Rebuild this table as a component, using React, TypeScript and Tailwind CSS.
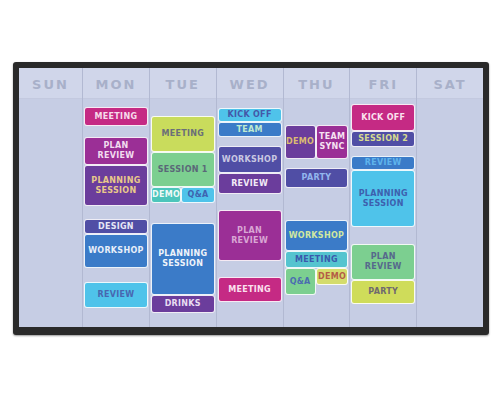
import React from "react";

// card shell: white edge, tiny caps label
function Card({ label, className }: { label: React.ReactNode; className: string }) {
  return (
    <div
      className={`flex items-center justify-center text-center rounded-[3px] border-[1.5px] border-white/90 text-[8px] font-bold tracking-[0.3px] leading-[10px] uppercase ${className}`}
    >
      {label}
    </div>
  );
}

function Day({ name, first, children }: { name: string; first?: boolean; children?: React.ReactNode }) {
  return (
    <div className={`flex flex-col ${first ? "" : "border-l border-[#b2b9d2]"}`}>
      <div className="h-[31px] shrink-0 bg-[#d0d6ea] border-b border-[#c3c9df] flex items-center justify-center pt-[3px] text-[13px] font-bold tracking-[2px] text-[#a8b0c9]">
        {name}
      </div>
      <div className="flex-1 flex flex-col px-[1px]">{children}</div>
    </div>
  );
}

export default function App() {
  return (
    <div className="w-[500px] h-[400px] bg-white pt-[62px] pl-[13px] font-['DejaVu_Sans',sans-serif]">
      <div className="w-[476px] h-[273px] bg-[#2a2a2a] rounded-[3px] pt-[6px] px-[6px] pb-[8px] shadow-[0_1px_2px_rgba(0,0,0,0.4)]">
        <div className="h-full grid grid-cols-[63px_repeat(6,1fr)] bg-[#c6cde4]">
          <Day name="SUN" first />

          <Day name="MON">
            <Card label="Meeting" className="mt-[8px] h-[19px] bg-[#c52a84] text-[#f6dbeb]" />
            <Card label={<>Plan<br />Review</>} className="mt-[11px] h-[28px] bg-[#9b2f96] text-[#f2dcef]" />
            <Card label={<>Planning<br />Session</>} className="h-[41px] bg-[#6b3d9c] text-[#e9c98a]" />
            <Card label="Design" className="mt-[13px] h-[15px] bg-[#504ea5] text-[#e6e6f5]" />
            <Card label="Workshop" className="h-[34px] bg-[#3b7bc8] text-[#e8eff9]" />
            <Card label="Review" className="mt-[14px] h-[26px] bg-[#4fc3ea] text-[#4867b0]" />
          </Day>

          <Day name="TUE">
            <Card label="Meeting" className="mt-[17px] h-[36px] bg-[#c9dc5c] text-[#6b6f78]" />
            <Card label="Session 1" className="h-[35px] bg-[#7ccf90] text-[#5a6878]" />
            <div className="flex h-[16px]">
              <Card label="Demo" className="w-[48%] h-full bg-[#4cc5bb] text-[#eef9f7]" />
              <Card label="Q&A" className="flex-1 h-full bg-[#4fc3ea] text-[#3e63b0]" />
            </div>
            <Card label={<>Planning<br />Session</>} className="mt-[20px] h-[72px] bg-[#3b7bc8] text-[#eef3fa]" />
            <Card label="Drinks" className="h-[18px] bg-[#6b3d9c] text-[#e8dcf2]" />
          </Day>

          <Day name="WED">
            <Card label="Kick Off" className="mt-[9px] h-[14px] bg-[#4fc3ea] text-[#4458a8]" />
            <Card label="Team" className="h-[15px] bg-[#3b7bc8] text-[#bfead0]" />
            <Card label="Workshop" className="mt-[9px] h-[27px] bg-[#504ea5] text-[#c9c8e2]" />
            <Card label="Review" className="h-[21px] bg-[#6b3d9c] text-[#f2eaf7]" />
            <Card label={<>Plan<br />Review</>} className="mt-[16px] h-[51px] bg-[#9b2f96] text-[#d9a6d4]" />
            <Card label="Meeting" className="mt-[16px] h-[25px] bg-[#c52a84] text-[#fbe0ee]" />
          </Day>

          <Day name="THU">
            <div className="flex mt-[26px] h-[34px]">
              <Card label="Demo" className="w-[49%] h-full bg-[#6b3d9c] text-[#dcbb72]" />
              <Card label={<>Team<br />Sync</>} className="flex-1 h-full bg-[#9b2f96] text-[#f6e2f2]" />
            </div>
            <Card label="Party" className="mt-[9px] h-[20px] bg-[#504ea5] text-[#93b6ee]" />
            <Card label="Workshop" className="mt-[32px] h-[31px] bg-[#3b7bc8] text-[#cfe7a0]" />
            <Card label="Meeting" className="h-[17px] bg-[#55c4cf] text-[#3a5aac]" />
            <div className="flex items-start">
              <Card label="Q&A" className="w-[49%] h-[27px] bg-[#7ccf90] text-[#4b6cb0]" />
              <Card label="Demo" className="flex-1 h-[17px] bg-[#d4dc6c] text-[#b45c46]" />
            </div>
          </Day>

          <Day name="FRI">
            <Card label="Kick Off" className="mt-[5px] h-[27px] bg-[#c52a84] text-[#fbe2ef]" />
            <Card label="Session 2" className="h-[16px] bg-[#504ea5] text-[#d6da8e]" />
            <Card label="Review" className="mt-[9px] h-[14px] bg-[#3b7bc8] text-[#5fb4ec]" />
            <Card label={<>Planning<br />Session</>} className="h-[57px] bg-[#4fc3ea] text-[#3d60ae]" />
            <Card label={<>Plan<br />Review</>} className="mt-[17px] h-[36px] bg-[#7ccf90] text-[#56698c]" />
            <Card label="Party" className="h-[24px] bg-[#cfdc5a] text-[#6f6a6e]" />
          </Day>

          <Day name="SAT" />
        </div>
      </div>
    </div>
  );
}
